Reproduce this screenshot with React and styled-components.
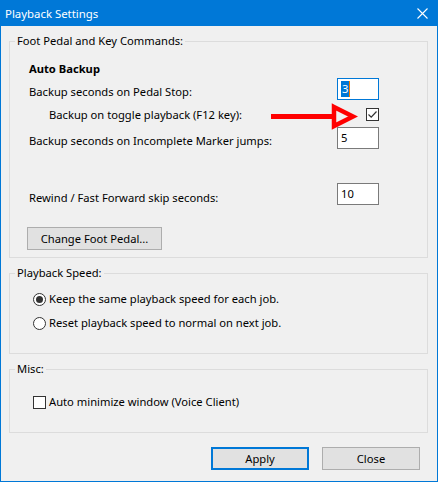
import React from "react";
import styled, { createGlobalStyle } from "styled-components";

const GlobalStyle = createGlobalStyle`
  html, body { margin: 0; padding: 0; background: #f0f0f0; }
  * { box-sizing: border-box; }
`;

const FONT = `"Noto Sans", "Segoe UI", sans-serif`;

const Window = styled.div`
  position: relative;
  width: 438px;
  height: 482px;
  border: 1px solid #0078d7;
  background: #f0f0f0;
  display: flex;
  flex-direction: column;
  font-family: ${FONT};
  font-size: 11.2px;
  color: #000;
`;

const TitleBar = styled.div`
  height: 25px;
  flex: none;
  background: #0078d7;
  color: #fff;
  display: flex;
  align-items: center;
  padding-left: 4px;
  font-size: 11.4px;
`;

const CloseIcon = styled.svg`
  margin-left: auto;
  margin-right: 9px;
  width: 11px;
  height: 11px;
`;

const Body = styled.div`
  padding: 15px 9px 0 8px;
  display: flex;
  flex-direction: column;
`;

const Group = styled.div`
  position: relative;
  border: 1px solid #dcdcdc;
  margin-top: ${(p) => p.$mt || 0}px;
  padding: 0 0 ${(p) => p.$pb}px ${(p) => p.$pl}px;
  display: flex;
  flex-direction: column;
`;

const Legend = styled.span`
  position: absolute;
  top: -9px;
  left: 5px;
  padding: 0 2px;
  background: #f0f0f0;
  line-height: 16px;
`;

const SectionTitle = styled.div`
  font-weight: bold;
  line-height: 16px;
  margin-top: 19px;
`;

const Row = styled.div`
  display: grid;
  grid-template-columns: 308px 42px;
  align-items: center;
  height: ${(p) => p.$h || 22}px;
  margin-top: ${(p) => p.$mt}px;
`;

const Label = styled.span`
  line-height: 16px;
  padding-top: ${(p) => (p.$shift || 0) * 2}px;
  padding-left: ${(p) => p.$indent || 0}px;
  white-space: nowrap;
`;

const TextBox = styled.div`
  width: 42px;
  height: 22px;
  background: #fff;
  border: 1px solid ${(p) => (p.$focused ? "#0078d7" : "#7a7a7a")};
  display: flex;
  align-items: center;
  padding-left: 3px;
  line-height: 16px;
`;

const Selected = styled.span`
  background: #0078d7;
  color: #fff;
  padding: 0 1px;
  border-right: 1px solid #f57c00;
`;

const Box = styled.span`
  width: 13px;
  height: 13px;
  border: 1px solid #333;
  background: #fff;
  display: inline-flex;
  align-items: center;
  justify-content: center;
  justify-self: ${(p) => (p.$end ? "end" : "start")};
  flex: none;
`;

const Radio = styled.span`
  width: 13px;
  height: 13px;
  border: 1px solid #333;
  border-radius: 50%;
  background: #fff;
  display: inline-flex;
  align-items: center;
  justify-content: center;
  flex: none;
  &::after {
    content: "";
    width: 7px;
    height: 7px;
    border-radius: 50%;
    background: ${(p) => (p.$checked ? "#333" : "transparent")};
  }
`;

const OptionRow = styled.div`
  display: flex;
  align-items: center;
  gap: 3px;
  height: 16px;
  line-height: 16px;
  margin-top: ${(p) => p.$mt}px;
`;

const Button = styled.div`
  width: ${(p) => p.$w}px;
  height: 23px;
  background: #e1e1e1;
  border: ${(p) => (p.$default ? "2px solid #0078d7" : "1px solid #adadad")};
  display: flex;
  align-items: center;
  justify-content: center;
  line-height: 16px;
  margin-top: ${(p) => p.$mt || 0}px;
  margin-left: ${(p) => p.$ml || 0}px;
  align-self: flex-start;
`;

const Footer = styled.div`
  display: flex;
  justify-content: flex-end;
  gap: 13px;
  margin-top: 14px;
  padding-right: 8px;
`;

const Arrow = styled.svg`
  position: absolute;
  left: 267px;
  top: 102px;
`;

const Check = () => (
  <svg width="11" height="11" viewBox="0 0 11 11">
    <path d="M1.5 5.5 L4.2 8.2 L9.5 2.5" fill="none" stroke="#333" strokeWidth="1.2" />
  </svg>
);

export default function App() {
  return (
    <>
      <GlobalStyle />
      <Window>
        <TitleBar>
          Playback Settings
          <CloseIcon viewBox="0 0 11 11">
            <path d="M0.5 0.5 L10.5 10.5 M10.5 0.5 L0.5 10.5" stroke="#fff" strokeWidth="1.1" />
          </CloseIcon>
        </TitleBar>
        <Body>
          <Group $pl={19} $pb={7}>
            <Legend>Foot Pedal and Key Commands:</Legend>
            <SectionTitle>Auto Backup</SectionTitle>
            <Row $mt={1}>
              <Label $shift={3}>Backup seconds on Pedal Stop:</Label>
              <TextBox $focused>
                <Selected>3</Selected>
              </TextBox>
            </Row>
            <Row $mt={4} $h={21}>
              <Label $indent={20} $shift={0.5}>Backup on toggle playback (F12 key):</Label>
              <Box $end>
                <Check />
              </Box>
            </Row>
            <Row $mt={2}>
              <Label $shift={3}>Backup seconds on Incomplete Marker jumps:</Label>
              <TextBox>5</TextBox>
            </Row>
            <Row $mt={33}>
              <Label $shift={4}>Rewind / Fast Forward skip seconds:</Label>
              <TextBox>10</TextBox>
            </Row>
            <Button $w={135} $mt={23} $ml={-2}>Change Foot Pedal...</Button>
          </Group>

          <Group $mt={15} $pl={23} $pb={22}>
            <Legend>Playback Speed:</Legend>
            <OptionRow $mt={17}>
              <Radio $checked />
              Keep the same playback speed for each job.
            </OptionRow>
            <OptionRow $mt={8}>
              <Radio />
              Reset playback speed to normal on next job.
            </OptionRow>
          </Group>

          <Group $mt={15} $pl={23} $pb={22}>
            <Legend>Misc:</Legend>
            <OptionRow $mt={24}>
              <Box />
              Auto minimize window (Voice Client)
            </OptionRow>
          </Group>

          <Footer>
            <Button $w={98} $default>Apply</Button>
            <Button $w={98}>Close</Button>
          </Footer>
        </Body>

        <Arrow width="90" height="28" viewBox="0 0 90 28">
          <path d="M3 13.5 L66 13.5" stroke="#f00" strokeWidth="5" />
          <path d="M66 4 L85 13.5 L66 23 Z" fill="none" stroke="#f00" strokeWidth="4.5" />
        </Arrow>
      </Window>
    </>
  );
}
